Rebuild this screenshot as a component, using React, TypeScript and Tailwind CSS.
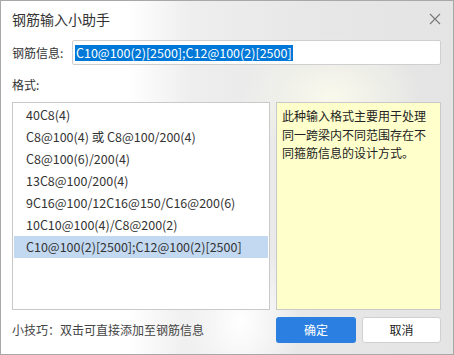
import React from 'react';

const formats = [
  '40C8(4)',
  'C8@100(4) 或 C8@100/200(4)',
  'C8@100(6)/200(4)',
  '13C8@100/200(4)',
  '9C16@100/12C16@150/C16@200(6)',
  '10C10@100(4)/C8@200(2)',
  'C10@100(2)[2500];C12@100(2)[2500]',
];

const selectedIndex = 6;

export default function App() {
  return (
    <div className="w-[454px] h-[355px] border border-[#a8a8a8] flex flex-col font-['Noto_Sans_CJK_SC',sans-serif] text-[#333] bg-[radial-gradient(ellipse_90px_60px_at_330px_95px,#f9f9ec_0%,transparent_100%),radial-gradient(ellipse_60px_80px_at_240px_320px,#ffffff_0%,transparent_100%),linear-gradient(90deg,#ffffff_0%,#ffffff_28%,#eeeeee_42%,#e7e7e7_70%,#e4e4e4_100%)]">
      <div className="h-[35px] flex items-center justify-between pl-[11px] pr-[12px]">
        <span className="text-[14px] leading-[16px] text-[#333]">钢筋输入小助手</span>
        <svg width="12" height="12" viewBox="0 0 12 12" className="text-[#777]">
          <path d="M1 1 L11 11 M11 1 L1 11" stroke="currentColor" strokeWidth="1.1" />
        </svg>
      </div>

      <div className="mt-[4px] h-[25px] flex items-center pl-[11px] pr-[12px]">
        <span className="w-[60px] text-[12px] leading-[16px] text-[#333]">钢筋信息:</span>
        <div className="flex-1 h-full bg-white border border-[#cfcfcf] rounded-[2px] flex items-center pl-[2px]">
          <span className="bg-[#0078d7] text-white text-[12.5px] leading-[16px] px-[1px]">
            C10@100(2)[2500];C12@100(2)[2500]
          </span>
        </div>
      </div>

      <div className="mt-[10px] h-[20px] pl-[11px] text-[12px] leading-[20px] text-[#333]">格式:</div>

      <div className="mt-[7px] h-[208px] flex gap-[6px] pl-[11px] pr-[12px]">
        <div className="w-[258px] h-full bg-white border border-[#c9c9c9] p-[1px]">
          {formats.map((f, i) => (
            <div
              key={f}
              className={`h-[22px] flex items-center pl-[12px] text-[12.5px] text-[#333] ${
                i === selectedIndex ? 'bg-[#c3d9f1]' : ''
              }`}
            >
              {f}
            </div>
          ))}
        </div>
        <div className="flex-1 h-full bg-[#ffffcc] border border-[#c9c9c9] pl-[5px] pr-[4px] pt-[4px] text-[12px] leading-[18.5px] text-[#222]">
          此种输入格式主要用于处理同一跨梁内不同范围存在不同箍筋信息的设计方式。
        </div>
      </div>

      <div className="mt-[7px] h-[26px] flex items-center pl-[11px] pr-[12px]">
        <span className="flex-1 text-[12px] leading-[16px] text-[#444]">小技巧：双击可直接添加至钢筋信息</span>
        <button className="w-[80px] h-full rounded-[3px] bg-[#2b7fe0] text-white text-[12px]">确定</button>
        <button className="ml-[6px] w-[79px] h-full rounded-[3px] bg-white border border-[#d0d0d0] text-[#222] text-[12px]">
          取消
        </button>
      </div>
    </div>
  );
}
